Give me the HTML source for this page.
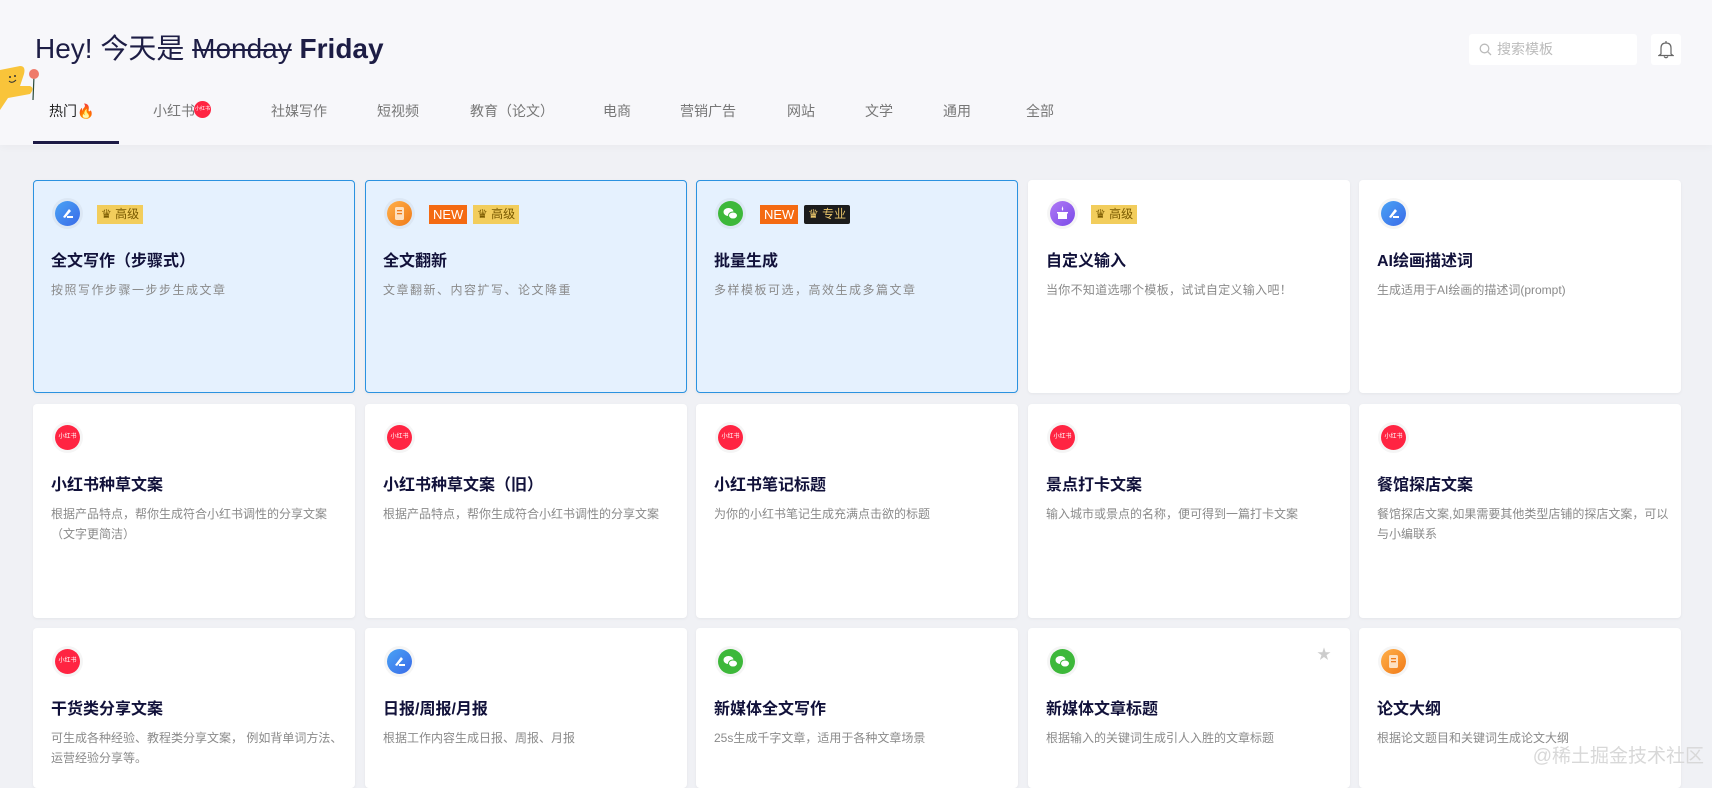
<!DOCTYPE html>
<html><head><meta charset="utf-8">
<style>
*{margin:0;padding:0;box-sizing:border-box}
body{width:1712px;height:772px;overflow:hidden;background:#f0f1f5;font-family:"Liberation Sans","Noto Sans CJK SC",sans-serif;position:relative}
.hdr{position:absolute;left:0;top:0;width:1712px;height:145px;background:#f7f7fa;box-shadow:0 2px 8px rgba(0,0,0,0.03)}
.title{position:absolute;left:35px;top:31px;font-size:28px;color:#1d1d45;white-space:nowrap;line-height:36px}
.title s{text-decoration-thickness:2px}
.title b{font-weight:bold}
.tab{position:absolute;top:101px;font-size:14px;color:#777;line-height:20px;white-space:nowrap}
.tab.act{color:#222}
.ul{position:absolute;left:33px;top:141px;width:86px;height:3px;background:#1d1a45}
.search{position:absolute;left:1469px;top:34px;width:168px;height:31px;background:#fff;border-radius:3px;font-size:14px;color:#bbb;line-height:31px;padding-left:28px}
.bell{position:absolute;left:1651px;top:34px;width:30px;height:31px;background:#fff;border-radius:3px}
.card{position:absolute;width:322px;background:#fff;border-radius:4px;box-shadow:0 1px 3px rgba(0,0,0,0.05)}
.card.hl{background:#e5f1fe;border:1px solid #2b92e0}
.ic{position:absolute;left:22px;top:21px;width:25px;height:25px;border-radius:50%;box-shadow:0 0 0 3px rgba(0,0,0,0.04)}
.ic svg{position:absolute;left:0;top:0}
.card.hl .ic{left:21px;top:20px}
.bd{position:absolute;top:25px;height:19px;font-size:12px;line-height:19px;padding:0 4px;white-space:nowrap}
.card.hl .bd{top:24px}
.gj{background:#f2cd5c;color:#7a5a00}
.nw{background:#f46a12;color:#fff;font-size:13px}
.zy{background:#1c1c1c;color:#e9c66b;border-radius:2px}
.ct{position:absolute;left:18px;top:67px;font-size:16px;font-weight:bold;color:#11113a;white-space:nowrap}
.cd{position:absolute;left:18px;top:100px;right:8px;font-size:12px;color:#8a8a8a;line-height:20px}
.hl .cd,.c1 .cd{letter-spacing:1.5px}
.card.hl .ct{left:17px;top:66px}
.card.hl .cd{left:17px;top:99px}
.xhs{background:#ff2442;color:#fff;font-size:6px;text-align:center;line-height:25px}
.wm{position:absolute;right:8px;top:741px;font-size:19px;color:#d8d8d8;white-space:nowrap}
</style></head><body>
<div class="hdr"></div>
<svg style="position:absolute;left:0;top:62px" width="45" height="52" viewBox="0 0 45 52">
<path d="M0 8 L20 4 Q26 4 24 12 L20 24 L30 24 Q35 26 30 32 L8 36 L0 48 Z" fill="#f9c43a"/>
<circle cx="10" cy="15" r="1" fill="#333"/><circle cx="15" cy="14" r="1" fill="#333"/>
<path d="M9 19 Q12 22 16 18" stroke="#333" fill="none" stroke-width="1"/>
<line x1="34" y1="14" x2="33" y2="38" stroke="#2a4a3a" stroke-width="1.2"/>
<circle cx="34" cy="12" r="5" fill="#ef7a6a"/>
</svg>
<div class="title">Hey! 今天是 <s>Monday</s> <b>Friday</b></div>
<div class="tab act" style="left:49px">热门<span style="color:#f5701f">🔥</span></div>
<div class="tab" style="left:153px">小红书<span style="display:inline-block;width:17px;height:17px;border-radius:50%;background:#ff2442;vertical-align:top;margin-left:-1px;color:#fff;font-size:5px;line-height:17px;text-align:center">小红书</span></div>
<div class="tab" style="left:271px">社媒写作</div>
<div class="tab" style="left:377px">短视频</div>
<div class="tab" style="left:470px">教育（论文）</div>
<div class="tab" style="left:603px">电商</div>
<div class="tab" style="left:680px">营销广告</div>
<div class="tab" style="left:787px">网站</div>
<div class="tab" style="left:865px">文学</div>
<div class="tab" style="left:943px">通用</div>
<div class="tab" style="left:1026px">全部</div>
<div class="ul"></div>
<div class="search"><svg style="position:absolute;left:10px;top:9px" width="13" height="13" viewBox="0 0 13 13"><circle cx="5.5" cy="5.5" r="4.3" stroke="#bbb" stroke-width="1.3" fill="none"/><line x1="8.6" y1="8.6" x2="12" y2="12" stroke="#bbb" stroke-width="1.3"/></svg>搜索模板</div>
<div class="bell"><svg style="position:absolute;left:7px;top:6px" width="16" height="19" viewBox="0 0 16 19"><path d="M3 14 V8 Q3 3 8 3 Q13 3 13 8 V14 L15 15.5 H1 Z" stroke="#666" stroke-width="1.2" fill="none"/><line x1="8" y1="1" x2="8" y2="3" stroke="#666" stroke-width="1.2"/><path d="M6 16.5 Q8 19 10 16.5" stroke="#666" fill="none" stroke-width="1.2"/></svg></div>

<!-- row1 -->
<div class="card hl" style="left:33px;top:180px;height:213px"><div class="ic" style="background:linear-gradient(135deg,#4aa3f5,#3a6ae8)"><svg width="25" height="25"><path d="M8 16 L14 8 L16 10 L10 17 Z" fill="#fff"/><rect x="12" y="15" width="6" height="2" fill="#fff"/></svg></div><div class="bd gj" style="left:63px">♛ 高级</div><div class="ct">全文写作（步骤式）</div><div class="cd">按照写作步骤一步步生成文章</div></div>
<div class="card hl" style="left:365px;top:180px;height:213px"><div class="ic" style="background:linear-gradient(135deg,#ffb04a,#f07a18)"><svg width="25" height="25"><rect x="8" y="6" width="9" height="13" rx="1.5" fill="#fde0c0"/><rect x="10" y="9" width="5" height="1.3" fill="#f07a18"/><rect x="10" y="12" width="5" height="1.3" fill="#f07a18"/></svg></div><div class="bd nw" style="left:63px">NEW</div><div class="bd gj" style="left:107px">♛ 高级</div><div class="ct">全文翻新</div><div class="cd">文章翻新、内容扩写、论文降重</div></div>
<div class="card hl" style="left:696px;top:180px;height:213px"><div class="ic" style="background:#3db83a"><svg width="25" height="25"><ellipse cx="10.5" cy="11" rx="5" ry="4" fill="#fff"/><ellipse cx="15" cy="14.5" rx="4.5" ry="3.5" fill="#fff" stroke="#3db83a" stroke-width="1"/></svg></div><div class="bd nw" style="left:63px">NEW</div><div class="bd zy" style="left:107px">♛ 专业</div><div class="ct">批量生成</div><div class="cd">多样模板可选，高效生成多篇文章</div></div>
<div class="card c1" style="left:1028px;top:180px;height:213px"><div class="ic" style="background:linear-gradient(135deg,#b07af5,#7a4ae8)"><svg width="25" height="25"><rect x="8" y="12" width="9" height="6" fill="#fff"/><rect x="7" y="11" width="11" height="1.5" fill="#fff"/><path d="M12.5 5 L13.3 8 L12.5 10 L11.7 8Z" fill="#fff"/></svg></div><div class="bd gj" style="left:63px">♛ 高级</div><div class="ct">自定义输入</div><div class="cd" style="letter-spacing:0.3px">当你不知道选哪个模板，试试自定义输入吧！</div></div>
<div class="card" style="left:1359px;top:180px;height:213px"><div class="ic" style="background:linear-gradient(135deg,#4aa3f5,#3a6ae8)"><svg width="25" height="25"><path d="M8 16 L14 8 L16 10 L10 17 Z" fill="#fff"/><rect x="12" y="15" width="6" height="2" fill="#fff"/></svg></div><div class="ct">AI绘画描述词</div><div class="cd">生成适用于AI绘画的描述词(prompt)</div></div>
<!-- row2 -->
<div class="card" style="left:33px;top:404px;height:214px"><div class="ic xhs">小红书</div><div class="ct">小红书种草文案</div><div class="cd">根据产品特点，帮你生成符合小红书调性的分享文案（文字更简洁）</div></div>
<div class="card" style="left:365px;top:404px;height:214px"><div class="ic xhs">小红书</div><div class="ct">小红书种草文案（旧）</div><div class="cd">根据产品特点，帮你生成符合小红书调性的分享文案</div></div>
<div class="card" style="left:696px;top:404px;height:214px"><div class="ic xhs">小红书</div><div class="ct">小红书笔记标题</div><div class="cd">为你的小红书笔记生成充满点击欲的标题</div></div>
<div class="card" style="left:1028px;top:404px;height:214px"><div class="ic xhs">小红书</div><div class="ct">景点打卡文案</div><div class="cd">输入城市或景点的名称，便可得到一篇打卡文案</div></div>
<div class="card" style="left:1359px;top:404px;height:214px"><div class="ic xhs">小红书</div><div class="ct">餐馆探店文案</div><div class="cd">餐馆探店文案,如果需要其他类型店铺的探店文案，可以与小编联系</div></div>
<!-- row3 -->
<div class="card" style="left:33px;top:628px;height:160px"><div class="ic xhs">小红书</div><div class="ct">干货类分享文案</div><div class="cd">可生成各种经验、教程类分享文案， 例如背单词方法、运营经验分享等。</div></div>
<div class="card" style="left:365px;top:628px;height:160px"><div class="ic" style="background:linear-gradient(135deg,#4aa3f5,#3a6ae8)"><svg width="25" height="25"><path d="M8 16 L14 8 L16 10 L10 17 Z" fill="#fff"/><rect x="12" y="15" width="6" height="2" fill="#fff"/></svg></div><div class="ct">日报/周报/月报</div><div class="cd">根据工作内容生成日报、周报、月报</div></div>
<div class="card" style="left:696px;top:628px;height:160px"><div class="ic" style="background:#3db83a"><svg width="25" height="25"><ellipse cx="10.5" cy="11" rx="5" ry="4" fill="#fff"/><ellipse cx="15" cy="14.5" rx="4.5" ry="3.5" fill="#fff" stroke="#3db83a" stroke-width="1"/></svg></div><div class="ct">新媒体全文写作</div><div class="cd">25s生成千字文章，适用于各种文章场景</div></div>
<div class="card" style="left:1028px;top:628px;height:160px"><div class="ic" style="background:#3db83a"><svg width="25" height="25"><ellipse cx="10.5" cy="11" rx="5" ry="4" fill="#fff"/><ellipse cx="15" cy="14.5" rx="4.5" ry="3.5" fill="#fff" stroke="#3db83a" stroke-width="1"/></svg></div><span style="position:absolute;left:289px;top:16px;color:#ccc;font-size:14px">★</span><div class="ct">新媒体文章标题</div><div class="cd">根据输入的关键词生成引人入胜的文章标题</div></div>
<div class="card" style="left:1359px;top:628px;height:160px"><div class="ic" style="background:linear-gradient(135deg,#ffb04a,#f07a18)"><svg width="25" height="25"><rect x="8" y="6" width="9" height="13" rx="1.5" fill="#fde0c0"/><rect x="10" y="9" width="5" height="1.3" fill="#f07a18"/><rect x="10" y="12" width="5" height="1.3" fill="#f07a18"/></svg></div><div class="ct">论文大纲</div><div class="cd">根据论文题目和关键词生成论文大纲</div></div>
<div class="wm">@稀土掘金技术社区</div>
</body></html>
